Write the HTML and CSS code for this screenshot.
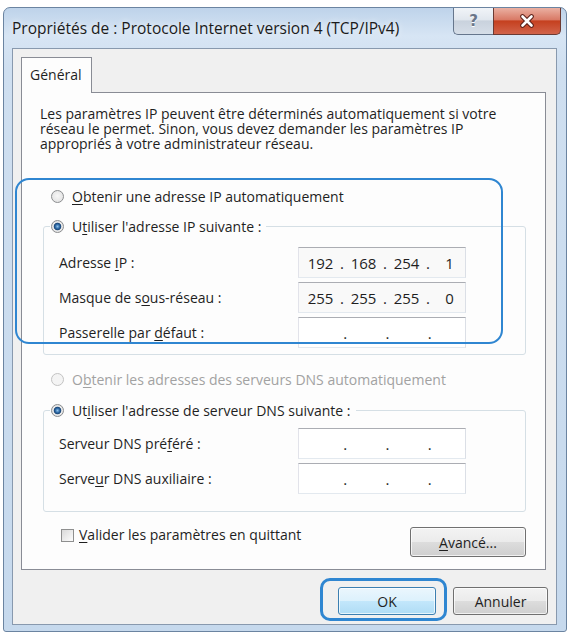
FILE: index.html
```html
<!DOCTYPE html>
<html lang="fr">
<head>
<meta charset="utf-8">
<title>Propriétés de : Protocole Internet version 4 (TCP/IPv4)</title>
<link rel="stylesheet" href="styles.css">
</head>
<body>
<div class="window">
  <div class="titlebar">
    <span class="title">Propriétés de : Protocole Internet version 4 (TCP/IPv4)</span>
    <div class="caption">
      <div class="cb help"><span class="qmark">?</span></div>
      <div class="cb close">
        <svg width="16" height="14" viewBox="0 0 16 14" aria-hidden="true">
          <path d="M3.5 2.5 L12.5 11.5 M12.5 2.5 L3.5 11.5" stroke="#5a2018" stroke-width="4.6" stroke-linecap="round" fill="none"/>
          <path d="M3.5 2.5 L12.5 11.5 M12.5 2.5 L3.5 11.5" stroke="#ffffff" stroke-width="2.6" stroke-linecap="round" fill="none"/>
        </svg>
      </div>
    </div>
  </div>
  <div class="client">
    <div class="tabs"><div class="tab">Général</div></div>
    <div class="page">
      <p class="intro"><span class="line">Les paramètres IP peuvent être déterminés automatiquement si votre</span><span class="line">réseau le permet. Sinon, vous devez demander les paramètres IP</span><span class="line">appropriés à votre administrateur réseau.</span></p>

      <div class="radio-row r1"><span class="radio"></span><span><u>O</u>btenir une adresse IP automatiquement</span></div>

      <fieldset class="group g1">
        <legend><span class="radio-row in-legend"><span class="radio on"></span><span>U<u>t</u>iliser l'adresse IP suivante :</span></span></legend>
        <div class="field">
          <span class="label">Adresse <u>I</u>P :</span>
          <div class="ip"><span class="oct">192</span><span class="dot">.</span><span class="oct">168</span><span class="dot">.</span><span class="oct">254</span><span class="dot">.</span><span class="oct">1</span></div>
        </div>
        <div class="field">
          <span class="label">Masque de s<u>o</u>us-réseau :</span>
          <div class="ip"><span class="oct">255</span><span class="dot">.</span><span class="oct">255</span><span class="dot">.</span><span class="oct">255</span><span class="dot">.</span><span class="oct">0</span></div>
        </div>
        <div class="field">
          <span class="label">Passerelle par <u>d</u>éfaut :</span>
          <div class="ip empty"><span class="oct"></span><span class="dot">.</span><span class="oct"></span><span class="dot">.</span><span class="oct"></span><span class="dot">.</span><span class="oct"></span></div>
        </div>
      </fieldset>

      <div class="radio-row r-dns disabled"><span class="radio dis"></span><span>O<u>b</u>tenir les adresses des serveurs DNS automatiquement</span></div>

      <fieldset class="group g2">
        <legend><span class="radio-row in-legend"><span class="radio on"></span><span>Ut<u>i</u>liser l'adresse de serveur DNS suivante :</span></span></legend>
        <div class="field">
          <span class="label">Serveur DNS pré<u>f</u>éré :</span>
          <div class="ip empty"><span class="oct"></span><span class="dot">.</span><span class="oct"></span><span class="dot">.</span><span class="oct"></span><span class="dot">.</span><span class="oct"></span></div>
        </div>
        <div class="field">
          <span class="label">Serve<u>u</u>r DNS auxiliaire :</span>
          <div class="ip empty"><span class="oct"></span><span class="dot">.</span><span class="oct"></span><span class="dot">.</span><span class="oct"></span><span class="dot">.</span><span class="oct"></span></div>
        </div>
      </fieldset>

      <div class="bottom-row">
        <label class="check-row"><span class="check"></span><span><u>V</u>alider les paramètres en quittant</span></label>
        <button class="btn adv" type="button"><u>A</u>vancé...</button>
      </div>
    </div>
    <div class="footer">
      <button class="btn ok" type="button">OK</button>
      <button class="btn cancel" type="button">Annuler</button>
    </div>
  </div>
  <div class="hl hl-ip"></div>
  <div class="hl hl-ok"></div>
</div>
</body>
</html>
```

FILE: styles.css
```css
* { box-sizing: border-box; }

body {
  margin: 0;
  background: #ffffff;
  font-family: "Open Sans", "Noto Sans", "DejaVu Sans", sans-serif;
  font-size: 14px;
  color: #1f1f1f;
}

u { text-decoration-thickness: 1px; text-underline-offset: 2px; }

.window {
  position: relative;
  width: 564px;
  height: 625px;
  margin: 7px 0 0 3px;
  border: 1px solid #6b84a1;
  border-radius: 7px 7px 3px 3px;
  background: linear-gradient(180deg, #bed3ea 0, #d7e5f4 28px, #cfdff0 60px, #c6d9ed 100%);
  display: flex;
  flex-direction: column;
}

.titlebar {
  height: 40px;
  display: flex;
  align-items: flex-start;
  padding-left: 8px;
  flex: none;
}

.title {
  margin-top: 10px;
  line-height: 20px;
  font-size: 15.5px;
  color: #1b1b1b;
  text-shadow: 0 0 6px rgba(255,255,255,0.9);
}

.caption {
  margin-left: auto;
  margin-right: 5px;
  display: flex;
}

.cb {
  height: 27px;
  display: flex;
  align-items: center;
  justify-content: center;
  border: 1px solid #66768c;
  border-top: none;
}

.help {
  width: 40px;
  border-right: none;
  border-radius: 0 0 0 5px;
  background: linear-gradient(180deg, #f1f4f8 0, #e1e7ee 45%, #c9d2dd 50%, #d6dee8 100%);
}

.qmark {
  font-family: "DejaVu Sans", sans-serif;
  font-weight: bold;
  font-size: 15px;
  line-height: 15px;
  color: #6a768a;
  text-shadow: 0 1px 0 #ffffff;
}

.close {
  width: 68px;
  border-color: #6b3a33;
  border-radius: 0 0 5px 0;
  background: linear-gradient(180deg, #eab0a2 0, #d97a66 45%, #c5401f 50%, #d1634a 100%);
}

.client {
  flex: 1;
  margin: 0 9px 6px 8px;
  background: #f0f0f0;
  border: 1px solid #8899ae;
  padding: 8px 8px 0 8px;
  display: flex;
  flex-direction: column;
}

.tabs { display: flex; }

.tab {
  position: relative;
  z-index: 1;
  width: 71px;
  height: 36px;
  margin-bottom: -1px;
  background: #fdfdfd;
  border: 1px solid #898c95;
  border-bottom: none;
  padding: 8px 0 0 8px;
  line-height: 18px;
}

.page {
  height: 478px;
  margin-right: 2px;
  background: #fdfdfd;
  border: 1px solid #898c95;
  padding: 13px 19px 0 18px;
}

.intro {
  margin: 0;
  display: flex;
  flex-direction: column;
}

.intro .line {
  display: block;
  height: 15px;
  line-height: 15px;
  white-space: nowrap;
}

.radio-row {
  display: flex;
  align-items: center;
  height: 20px;
  gap: 8px;
}

.r1 { margin: 35px 0 0 11px; }
.r-dns { margin: 14px 0 0 11px; }
.disabled { color: #a2a2a2; }

.radio {
  width: 13px;
  height: 13px;
  flex: none;
  border-radius: 50%;
  border: 1px solid #8b8d8f;
  background: radial-gradient(circle at 50% 45%, #f7f7f7 0, #dedede 100%);
}

.radio.on {
  background: radial-gradient(circle at 50% 50%, #8cc0ea 0, #2e68a3 2.2px, #1b4676 3.4px, #ececec 4.2px, #d6d6d6 100%);
}

.radio.dis {
  border-color: #c3c3c3;
  background: #f4f4f4;
}

.group {
  margin: 10px 0 0 3px;
  padding: 11px 0 6px 0;
  border: 1px solid #d5dfe5;
  border-radius: 3px;
  min-width: 0;
}

.g2 {
  margin-top: 11px;
  padding: 8px 0 17px 0;
}

.group legend {
  margin-left: 6px;
  padding: 0 5px 0 1px;
}

.field {
  display: flex;
  align-items: center;
  height: 31px;
  padding: 0 59px 0 15px;
}

.field + .field { margin-top: 4px; }

.label { flex: 1; }

.ip {
  width: 168px;
  height: 31px;
  display: flex;
  align-items: center;
  padding-left: 7px;
  border: 1px solid;
  border-color: #abadb3 #dbdfe6 #e3e9ef #e2e3ea;
  background: #f9f9f9;
  font-size: 15px;
}

.ip.empty { background: #ffffff; padding-left: 11px; }

.oct { width: 29px; text-align: center; }
.dot { width: 14px; text-align: center; }

.bottom-row {
  display: flex;
  align-items: flex-start;
  margin-top: 15px;
}

.check-row {
  display: flex;
  align-items: center;
  gap: 5px;
  margin-left: 21px;
  line-height: 16px;
}

.check {
  width: 13px;
  height: 13px;
  border: 1px solid #8e8f8f;
  background: linear-gradient(135deg, #d9d9d9 0, #fdfdfd 100%);
}

.btn {
  font: inherit;
  color: #1f1f1f;
  height: 28px;
  padding: 0;
  border: 1px solid #707070;
  border-radius: 3px;
  background: linear-gradient(180deg, #f3f3f3 0, #ebebeb 50%, #dddddd 50%, #cfcfcf 100%);
  box-shadow: inset 0 0 0 1px rgba(255,255,255,0.7);
}

.adv {
  margin-left: auto;
  width: 116px;
  height: 30px;
}

.footer {
  display: flex;
  justify-content: flex-end;
  gap: 17px;
  margin-top: 17px;
}

.ok {
  width: 98px;
  border-color: #3c7fb1;
  background: linear-gradient(180deg, #ebf6fd 0, #dcf1fc 50%, #c3e7fb 50%, #afdcf5 100%);
}

.cancel { width: 95px; }

.hl {
  position: absolute;
  border-style: solid;
  border-color: #2f86d1;
  pointer-events: none;
}

.hl-ip {
  left: 11px;
  top: 170px;
  width: 488px;
  height: 166px;
  border-width: 2px;
  border-radius: 14px;
}

.hl-ok {
  left: 316px;
  top: 570px;
  width: 127px;
  height: 43px;
  border-width: 3px;
  border-radius: 10px;
}
```
